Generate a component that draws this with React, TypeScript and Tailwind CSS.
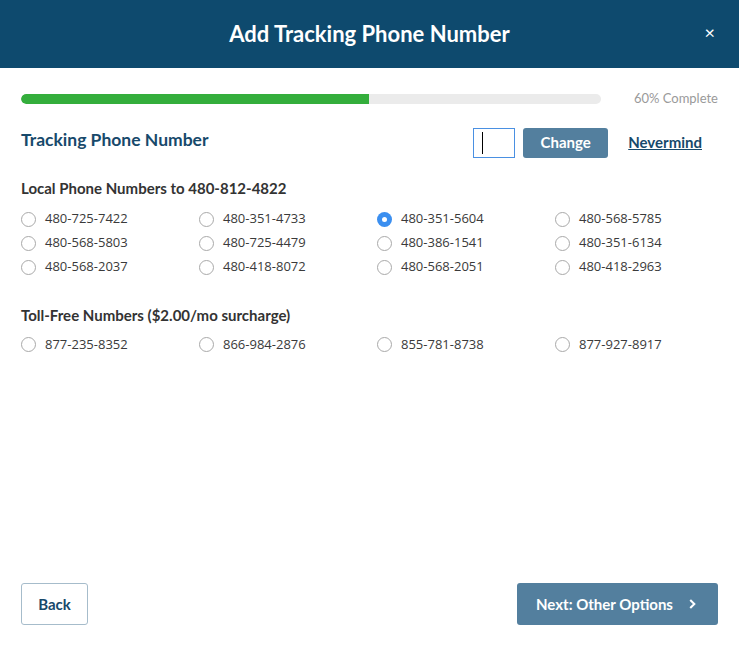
import React, { useState } from 'react';

const local = [
  '480-725-7422', '480-351-4733', '480-351-5604', '480-568-5785',
  '480-568-5803', '480-725-4479', '480-386-1541', '480-351-6134',
  '480-568-2037', '480-418-8072', '480-568-2051', '480-418-2963',
];

const tollFree = ['877-235-8352', '866-984-2876', '855-781-8738', '877-927-8917'];

const Radio = ({ label, checked, onSelect }: { label: string; checked: boolean; onSelect: () => void }) => (
  <label className="flex items-center h-6 cursor-pointer" onClick={onSelect}>
    {checked ? (
      <span className="w-[15px] h-[15px] rounded-full bg-[#3b8ff0] flex items-center justify-center">
        <span className="w-[5px] h-[5px] rounded-full bg-white" />
      </span>
    ) : (
      <span className="w-[15px] h-[15px] rounded-full border border-[#a9a9a9] bg-white" />
    )}
    <span className="ml-[9px] text-[13px] text-[#3a3a3a] font-['Open_Sans',sans-serif]">{label}</span>
  </label>
);

export default function App() {
  const [selected, setSelected] = useState('480-351-5604');

  return (
    <div className="w-[739px] h-[648px] bg-white flex flex-col font-['Lato',sans-serif]">
      <header className="h-[68px] bg-[#0e4a6e] flex items-center justify-center relative shrink-0">
        <h1 className="text-white text-[22px] font-bold -mt-[2px]">Add Tracking Phone Number</h1>
        <button className="absolute right-[24px] top-[23px] text-white text-[18px] leading-none">×</button>
      </header>

      <div className="flex-1 flex flex-col px-[21px]">
        <div className="flex items-center mt-[21px]">
          <div className="w-[580px] h-[10px] rounded-full bg-[#ebebeb] overflow-hidden">
            <div className="h-full bg-[#34ae3c] rounded-l-full" style={{ width: '60%' }} />
          </div>
          <span className="ml-auto text-[13px] text-[#9a9a9a]">60% Complete</span>
        </div>

        <div className="flex items-center mt-[15px]">
          <h2 className="text-[17.5px] font-bold text-[#17496b]">Tracking Phone Number</h2>
          <div className="ml-auto mt-[4px] flex items-center">
            <div className="w-[42px] h-[30px] border border-[#4a90e2] bg-white flex items-center pl-[8px]">
              <span className="w-px h-[22px] bg-black" />
            </div>
            <button className="ml-[8px] w-[85px] h-[30px] rounded-[3px] bg-[#537f9e] text-white text-[15px] font-bold">
              Change
            </button>
            <a href="#" className="ml-[20px] mr-[16px] text-[15px] font-bold text-[#17496b] underline">
              Nevermind
            </a>
          </div>
        </div>

        <h3 className="mt-[19px] text-[15px] font-bold text-[#333]">Local Phone Numbers to 480-812-4822</h3>
        <div className="grid grid-cols-[178px_178px_178px_1fr] mt-[8px]">
          {local.map((n) => (
            <Radio key={n} label={n} checked={selected === n} onSelect={() => setSelected(n)} />
          ))}
        </div>

        <h3 className="mt-[25px] text-[15px] font-bold text-[#333]">Toll-Free Numbers ($2.00/mo surcharge)</h3>
        <div className="grid grid-cols-[178px_178px_178px_1fr] mt-[6px]">
          {tollFree.map((n) => (
            <Radio key={n} label={n} checked={selected === n} onSelect={() => setSelected(n)} />
          ))}
        </div>

        <div className="mt-auto mb-[23px] flex items-center justify-between">
          <button className="w-[67px] h-[42px] rounded-[3px] border border-[#a6bccb] text-[15px] font-bold text-[#17496b]">
            Back
          </button>
          <button className="w-[201px] h-[42px] rounded-[3px] bg-[#537f9e] text-white text-[15px] font-bold flex items-center justify-center">
            Next: Other Options
            <svg width="14" height="14" viewBox="0 0 24 24" fill="none" stroke="white" strokeWidth="3.5" className="ml-[12px]">
              <path d="M9 5l7 7-7 7" />
            </svg>
          </button>
        </div>
      </div>
    </div>
  );
}
